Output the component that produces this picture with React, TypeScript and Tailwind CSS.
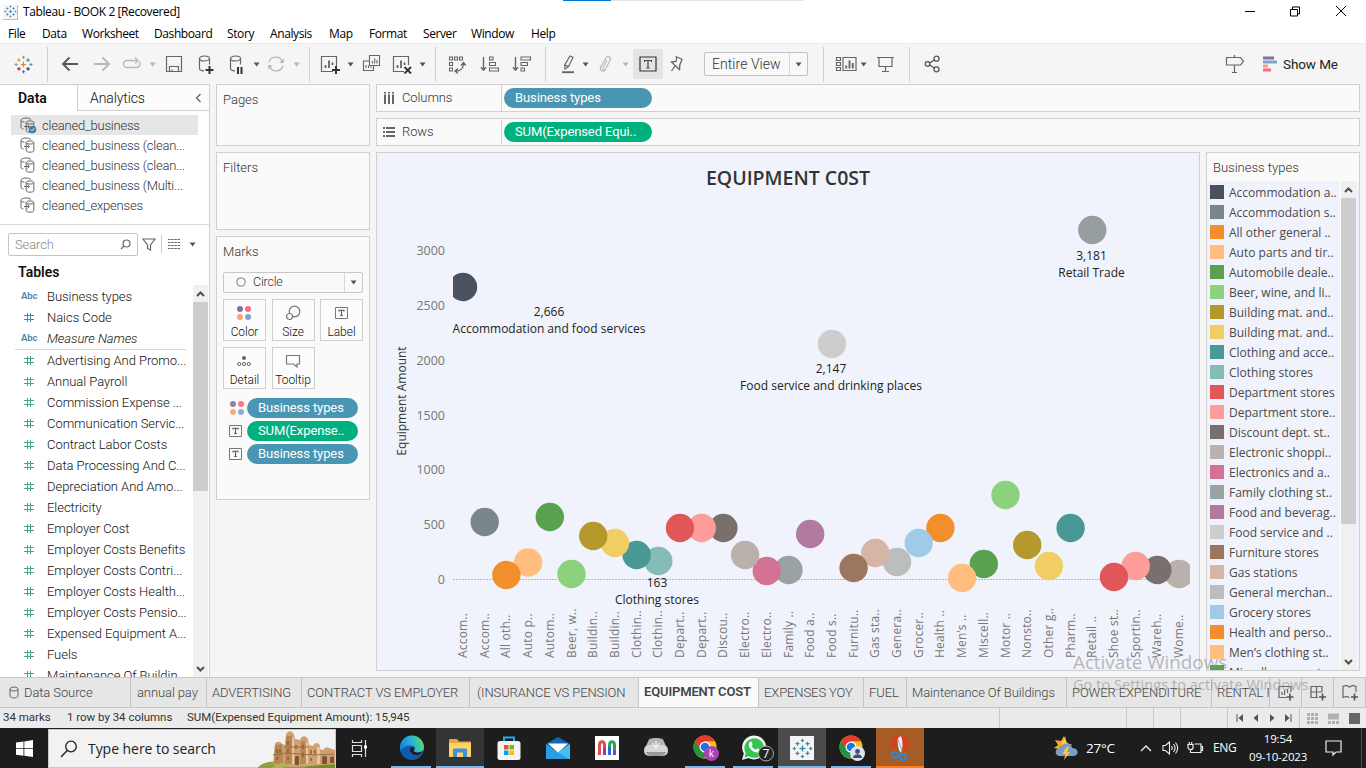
import React from "react";

type Kids = { children?: React.ReactNode; className?: string };

/* ---------- shared drawing helpers ---------- */

function Ico({
  children,
  w = 20,
  h = 20,
  className = "",
}: Kids & { w?: number; h?: number }) {
  return (
    <svg
      width={w}
      height={h}
      viewBox={`0 0 ${w} ${h}`}
      fill="none"
      className={"block shrink-0 " + className}
    >
      {children}
    </svg>
  );
}

function Caret({ className = "", light = false }: { className?: string; light?: boolean }) {
  return (
    <Ico w={7} h={5} className={className}>
      <path d="M.6.6h6L3.600 4.400z" fill={light ? "#b4b4b4" : "#555"} />
    </Ico>
  );
}

function Divider({ className = "" }: { className?: string }) {
  return <div className={"h-[35px] w-px shrink-0 bg-[#cfcfcf] " + className} />;
}

function plus(x: number, y: number, r: number) {
  return `M${x - r} ${y}h${2 * r}M${x} ${y - r}v${2 * r}`;
}

function TableauMark({ mono = false, size = 20 }: { mono?: boolean; size?: number }) {
  const c = (s: string) => (mono ? "#3c84ad" : s);
  return (
    <svg width={size} height={size} viewBox="0 0 20 20" fill="none" className="block shrink-0">
      <path d={plus(10, 10, 2.8)} stroke={c("#e8762c")} strokeWidth="1.2" />
      <path d={plus(5.2, 5.4, 1.9)} stroke={c("#e79a3c")} strokeWidth="1.1" />
      <path d={plus(14.8, 5.4, 1.9)} stroke={c("#5b879b")} strokeWidth="1.1" />
      <path d={plus(5.2, 14.6, 1.9)} stroke={c("#c72035")} strokeWidth="1.1" />
      <path d={plus(14.8, 14.6, 1.9)} stroke={c("#1f447e")} strokeWidth="1.1" />
      <path d={plus(10, 2.4, 1.6)} stroke={c("#7099a6")} strokeWidth="1.1" />
      <path d={plus(2.2, 10, 1.6)} stroke={c("#7099a6")} strokeWidth="1.1" />
      <path d={plus(17.8, 10, 1.6)} stroke={c("#59879b")} strokeWidth="1.1" />
      <path d={plus(10, 17.6, 1.6)} stroke={c("#5b6591")} strokeWidth="1.1" />
    </svg>
  );
}

/* ---------- title and menu ---------- */

function TitleBar() {
  return (
    <div className="relative flex h-6 shrink-0 items-center bg-white pl-[3px]">
      <div className="flex size-[15px] items-center justify-center border-r border-b border-[#bdbdbd] bg-[#f5f5f5]">
        <TableauMark mono size={13} />
      </div>
      <span className="ml-[5px] font-['Open_Sans','Noto_Sans',sans-serif] text-[12px] leading-6 tracking-[-0.4px] text-black">
        Tableau - BOOK 2 [Recovered]
      </span>
      <div className="absolute top-0 left-[563px] flex h-px w-[241px] bg-[#e3e3e3]">
        <div className="h-px w-12 bg-[#0078d7]" />
      </div>
      <div className="ml-auto flex items-center pr-[19px] pb-[3px]">
        <Ico w={10} h={12}>
          <path d="M0 6.500h10" stroke="#000" />
        </Ico>
        <Ico w={10} h={12} className="ml-[35px]">
          <path d="M.5 4.500h7v6.500h-7zM2.500 4.500v-2.500h7v7h-2" stroke="#000" />
        </Ico>
        <Ico w={12} h={12} className="ml-[35px]">
          <path d="M1 1l10 10M11 1L1 11" stroke="#000" />
        </Ico>
      </div>
    </div>
  );
}

const menus: [string, string][] = [
  ["File", "w-[34px]"],
  ["Data", "w-[40px]"],
  ["Worksheet", "w-[72px]"],
  ["Dashboard", "w-[73px]"],
  ["Story", "w-[43px]"],
  ["Analysis", "w-[59px]"],
  ["Map", "w-[40px]"],
  ["Format", "w-[54px]"],
  ["Server", "w-[48px]"],
  ["Window", "w-[60px]"],
  ["Help", "w-[40px]"],
];

function MenuBar() {
  return (
    <div className="flex h-[19px] shrink-0 bg-white pl-2 font-['Open_Sans','Noto_Sans',sans-serif] text-[12px] leading-[20px] tracking-[-0.4px] text-black">
      {menus.map(([m, w]) => (
        <span key={m} className={"shrink-0 whitespace-nowrap " + w}>
          {m}
        </span>
      ))}
    </div>
  );
}

/* ---------- toolbar ---------- */

const S = "#666";
const L = "#b8b8b8";

function Toolbar() {
  return (
    <div className="flex h-[41px] shrink-0 items-center border-t border-[#ececec] bg-[#f5f5f5] pl-[14px]">
      <TableauMark size={19} />
      <Divider className="ml-[14px]" />
      <Ico className="ml-3">
        <path d="M18 10H3M9.500 3.500L3 10l6.500 6.500" stroke="#555" strokeWidth="1.800" />
      </Ico>
      <Ico className="ml-3">
        <path d="M2 10h15M10.500 3.500L17 10l-6.500 6.500" stroke={L} strokeWidth="1.800" />
      </Ico>
      <Ico className="ml-[10px]">
        <path d="M10 6.500H5a3.500 3.500 0 000 7h9.500a3.500 3.500 0 002.500-6M9 6.500h6M13 3.500l3 3-3 3" stroke={L} strokeWidth="1.300" />
      </Ico>
      <Caret light className="ml-[7px]" />
      <Ico className="ml-2">
        <path d="M2.500 2.500h15v15h-15zM5.500 17.500v-5h9v5M8 17.500v-2" stroke={S} strokeWidth="1.200" />
      </Ico>
      <Ico className="ml-3">
        <ellipse cx="8.500" cy="4.500" rx="5" ry="2.500" stroke={S} strokeWidth="1.200" />
        <path d="M3.500 4.500v10c0 1.200 1.800 2.200 4.500 2.300M13.500 4.500v6" stroke={S} strokeWidth="1.200" />
        <path d="M13.500 12v8M9.500 16h8" stroke="#333" strokeWidth="2" />
      </Ico>
      <Ico className="ml-[11px]">
        <ellipse cx="8.500" cy="4.500" rx="5" ry="2.500" stroke={S} strokeWidth="1.200" />
        <path d="M3.500 4.500v10c0 1.200 1.800 2.200 4.500 2.300M13.500 4.500v6" stroke={S} strokeWidth="1.200" />
        <path d="M11 13v7M14.500 13v7" stroke="#333" strokeWidth="2" />
      </Ico>
      <Caret className="ml-[6px]" />
      <Ico className="ml-[6px]">
        <path d="M3 8.500a7 7 0 0113.500-.5M17 11.500a7 7 0 01-13.500.5" stroke={L} strokeWidth="1.300" />
        <path d="M17.800 4.500v4.500h-4.500zM2.200 15.500v-4.500h4.500z" fill={L} />
      </Ico>
      <Caret light className="ml-[7px]" />
      <Divider className="ml-[9px]" />
      <Ico w={22} className="ml-[10px]">
        <path d="M13 17.500H1.500v-15h15V12" stroke={S} strokeWidth="1.200" />
        <path d="M5.500 14v-3M9 14V6.500M12.500 11V8.500" stroke={S} strokeWidth="1.800" />
        <path d="M16 12v8M12 16h8" stroke="#333" strokeWidth="2" />
      </Ico>
      <Caret className="ml-[5px]" />
      <Ico className="ml-[7px]">
        <path d="M8.500 1.500h10v10h-10zM8.500 7h-6v9.500h10v-5" stroke={S} strokeWidth="1.100" />
        <path d="M11.500 9.500V7M13.700 9.500v-5M16 9.500V6M5 14v-3M7.500 14v-2.500M10 14v-1.500" stroke={S} strokeWidth="1.100" />
      </Ico>
      <Ico w={22} className="ml-[11px]">
        <path d="M12 17.500H1.500v-15h15V11" stroke={S} strokeWidth="1.200" />
        <path d="M5.500 14v-3M9 14V6.500M12.500 11V8.500" stroke={S} strokeWidth="1.800" />
        <path d="M12.500 13l6.500 6.500M19 13l-6.500 6.500" stroke="#333" strokeWidth="1.900" />
      </Ico>
      <Caret className="ml-[5px]" />
      <Divider className="ml-[9px]" />
      <Ico className="ml-[11px]">
        <path d="M2.500 3h3v3h-3zM7.500 3h3v3h-3zM12.500 3h3v3h-3zM2.500 8.500h3v3h-3zM2.500 14h3v3h-3z" stroke={S} strokeWidth="1.100" />
        <path d="M9 17c4.500 0 7.500-3 7.500-7.500M14 11.500l2.500-3 2.300 3M11 14.500L8 17l3 2.500" stroke={S} strokeWidth="1.300" />
      </Ico>
      <Ico className="ml-[13px]">
        <path d="M3.500 3v13M1 13.200l2.500 3 2.500-3" stroke={S} strokeWidth="1.400" />
        <path d="M9.500 3h3.500v3H9.500zM9.500 8.500h6v3h-6zM9.500 14h9v3h-9z" stroke={S} strokeWidth="1.100" />
      </Ico>
      <Ico className="ml-3">
        <path d="M3.500 3v13M1 13.200l2.500 3 2.500-3" stroke={S} strokeWidth="1.400" />
        <path d="M9 3h9.500v3H9zM9 8.500h6.500v3H9zM9 14h3.500v3H9z" stroke={S} strokeWidth="1.100" />
      </Ico>
      <Divider className="ml-[13px]" />
      <Ico className="ml-3">
        <path d="M12 2l3 1.200-4.500 9.500L7 15l-.3-4zM7 11l3.500 1.600" stroke={S} strokeWidth="1.200" />
        <path d="M4 18.200h12" stroke={S} strokeWidth="1.900" />
      </Ico>
      <Caret className="ml-1" />
      <Ico className="ml-[7px]">
        <path d="M11 6l-4 7.500c-1 2.200 1.600 3.300 2.700 1.300L14 6.500c1.600-3.500-2.500-5.400-4.300-2.200L4.700 13c-1.600 3.500 2.300 5.500 4.600 2.800" stroke={L} strokeWidth="1.200" />
      </Ico>
      <Caret light className="ml-[6px]" />
      <div className="ml-1 flex size-[30px] shrink-0 items-center justify-center bg-[#e3e3e3]">
        <Ico w={18} h={16}>
          <path d="M1 1h16v14H1z" stroke="#333" strokeWidth="1.200" />
          <path d="M5.500 6V4.500h7V6M9 4.500v7.500M7.300 12h3.400" stroke="#444" strokeWidth="1.200" />
        </Ico>
      </div>
      <Ico className="ml-[5px]">
        <path d="M7.500 2.500l7 3M8.800 3.200L8 7.500 3.500 8l8 7.500.3-4.500 2.200-5.500M7.300 11.500L3.500 17" stroke={S} strokeWidth="1.300" />
      </Ico>
      <div className="ml-4 flex h-6 w-[104px] shrink-0 items-center rounded-[2px] border border-[#c3c3c3] bg-[#f8f8f8]">
        <span className="w-[84px] pl-[7px] text-[14px] font-light tracking-[0.05px] text-[#333]">Entire View</span>
        <div className="h-[22px] w-px bg-[#d8d8d8]" />
        <Caret className="ml-[5px]" />
      </div>
      <Divider className="ml-[15px]" />
      <Ico w={22} className="ml-[11px]">
        <path d="M1.500 3.500h4v3h-4zM1.500 8.500h4v3h-4zM1.500 13.500h4v3h-4zM8 3.500h13v13H8z" stroke={S} strokeWidth="1.200" />
        <path d="M11.200 14.500v-3M14.500 14.500V6.500M17.800 14.500V9" stroke={S} strokeWidth="1.900" />
      </Ico>
      <Caret className="ml-[3px]" />
      <Ico className="ml-[9px]">
        <path d="M1 3.500h17M3 4v8.500h13V4M9.500 12.500v5M6 17.500h7" stroke={S} strokeWidth="1.200" />
      </Ico>
      <Divider className="ml-[13px]" />
      <Ico className="ml-3">
        <path d="M7.500 9l5-3M7.500 11l5 3" stroke="#555" strokeWidth="1.300" />
        <circle cx="5.500" cy="10" r="2.300" stroke="#555" strokeWidth="1.300" />
        <circle cx="14.500" cy="4.700" r="2.500" stroke="#555" strokeWidth="1.300" />
        <circle cx="14.500" cy="15.300" r="2.500" stroke="#555" strokeWidth="1.300" />
      </Ico>
      <Ico className="ml-auto">
        <path d="M1.500 3.500H15.500l3 3.800-3 3.700H1.500zM9.500 1v2.500M9.500 11v7.500M7 18.500h5" stroke={S} strokeWidth="1.200" />
      </Ico>
      <Ico w={14} h={16} className="ml-[18px]">
        <path d="M0 2h11" stroke="#8a6f9b" strokeWidth="3" />
        <path d="M0 6h14" stroke="#80a5cc" strokeWidth="3" />
        <path d="M0 10h5" stroke="#f5a47a" strokeWidth="3" />
        <path d="M0 14h8" stroke="#fa6b7c" strokeWidth="3" />
      </Ico>
      <span className="mr-[29px] ml-[6px] w-[54px] text-[13.500px] tracking-[-0.1px] whitespace-nowrap text-[#222]">
        Show Me
      </span>
    </div>
  );
}

/* ---------- data pane ---------- */

function SourceIcon({ checked = false }: { checked?: boolean }) {
  return (
    <Ico w={18} h={18}>
      <path d="M4.500 13C3 12.800 2 12.200 2 11.500V4.500M7 2C4 2 2 3 2 4.200M2 4.500c0 .8 1.500 1.500 3.500 1.600M7 2c2 0 4 .5 5 1.500" stroke="#666" />
      <ellipse cx="11" cy="6.500" rx="3.800" ry="1.600" stroke="#666" />
      <path d="M7.200 6.500v8c0 1 1.500 1.700 3.800 1.700s3.800-.7 3.800-1.700v-8M5 10.500h5M8.500 8.700l1.900 1.800-1.900 1.800" stroke="#666" />
      {checked && (
        <>
          <circle cx="13.500" cy="13.500" r="3.800" fill="#3a7f9f" />
          <path d="M11.800 13.500l1.300 1.300 2.200-2.400" stroke="#fff" />
        </>
      )}
    </Ico>
  );
}

const sources = [
  "cleaned_business",
  "cleaned_business (clean...",
  "cleaned_business (clean...",
  "cleaned_business (Multi...",
  "cleaned_expenses",
];

const measures = [
  "Advertising And Promo...",
  "Annual Payroll",
  "Commission Expense ...",
  "Communication Servic...",
  "Contract Labor Costs",
  "Data Processing And C...",
  "Depreciation And Amo...",
  "Electricity",
  "Employer Cost",
  "Employer Costs Benefits",
  "Employer Costs Contri...",
  "Employer Costs Health...",
  "Employer Costs Pensio...",
  "Expensed Equipment A...",
  "Fuels",
  "Maintenance Of Buildin",
];

function Hash({ color }: { color: string }) {
  return (
    <Ico w={10} h={11} className="mr-[13px] ml-6">
      <path d="M3.500 1v9M6.500 1v9M0 3.500h10M0 7.500h10" stroke={color} />
    </Ico>
  );
}

function Abc() {
  return (
    <span className="mr-[6px] ml-[21px] w-5 text-[9.500px] font-semibold tracking-[-0.1px] text-[#4a84a3]">
      Abc
    </span>
  );
}

function FieldRow({ children }: Kids) {
  return (
    <div className="flex h-[21px] shrink-0 items-center text-[13px] font-light tracking-[-0.05px] whitespace-nowrap text-[#111]">
      {children}
    </div>
  );
}

function ScrollArrow({ up = false }: { up?: boolean }) {
  return (
    <div className="flex h-[17px] shrink-0 items-center justify-center">
      <Ico w={9} h={6}>
        <path d={up ? "M1 5l3.500-3.500L8 5" : "M1 1l3.500 3.500L8 1"} stroke="#505050" strokeWidth="2" />
      </Ico>
    </div>
  );
}

function DataPane() {
  return (
    <div className="flex h-full w-[210px] shrink-0 flex-col overflow-hidden border-t border-r border-[#d0d0d0] bg-white">
      <div className="flex h-[26px] shrink-0 text-[14px] leading-[26px]">
        <div className="w-[77px] pl-[18px] font-semibold text-[#111]">Data</div>
        <div className="flex flex-1 items-center border-b border-l border-[#d0d0d0] bg-[#fcfcfc] pr-[7px] pl-3 font-light tracking-[-0.1px] text-[#111]">
          Analytics
          <Ico w={7} h={10} className="ml-auto">
            <path d="M5.500 1L1.500 5l4 4" stroke="#666" strokeWidth="1.300" />
          </Ico>
        </div>
      </div>
      <div className="flex h-[114px] shrink-0 flex-col border-b border-[#d8d8d8] pt-1 pl-[11px]">
        {sources.map((s, i) => (
          <div
            key={i}
            className={
              "flex h-5 w-[187px] items-center pl-2 text-[13px] font-light tracking-[-0.2px] text-[#333] " +
              (i === 0 ? "bg-[#e6e6e6]" : "")
            }
          >
            <SourceIcon checked={i === 0} />
            <span className="ml-[5px] pt-px whitespace-nowrap">{s}</span>
          </div>
        ))}
      </div>
      <div className="flex h-[38px] shrink-0 items-center pl-2">
        <div className="flex h-[23px] w-[130px] items-center rounded-[2px] border border-[#c4c4c4] pr-[6px] pl-[6px] text-[13px] font-light tracking-[-0.1px] text-[#888]">
          <span className="pt-px">Search</span>
          <Ico w={11} h={11} className="ml-auto">
            <circle cx="6.500" cy="4.500" r="3.500" stroke="#666" strokeWidth="1.200" />
            <path d="M4 7L1 10" stroke="#666" strokeWidth="1.300" />
          </Ico>
        </div>
        <Ico w={14} h={13} className="ml-1">
          <path d="M1 1h12L8.500 7v5l-3-1.500V7z" stroke="#666" strokeWidth="1.200" />
        </Ico>
        <div className="ml-[5px] h-[18px] w-px bg-[#ccc]" />
        <Ico w={12} h={10} className="ml-[6px]">
          <path d="M0 .5h12M0 3.500h12M0 6.500h12M0 9.500h12" stroke="#666" strokeDasharray="2.500 .7" />
        </Ico>
        <Caret className="ml-[9px]" />
      </div>
      <div className="h-[22px] shrink-0 pl-[18px] text-[14px] leading-[19px] font-semibold text-[#111]">Tables</div>
      <div className="flex min-h-0 flex-1">
        <div className="flex w-[193px] flex-col overflow-hidden pt-px">
          <FieldRow>
            <Abc />
            Business types
          </FieldRow>
          <FieldRow>
            <Hash color="#4a84a3" />
            Naics Code
          </FieldRow>
          <FieldRow>
            <Abc />
            <span className="italic">Measure Names</span>
          </FieldRow>
          <div className="mr-[7px] ml-[15px] h-px shrink-0 bg-[#d8d8d8]" />
          {measures.map((m) => (
            <FieldRow key={m}>
              <Hash color="#4ba583" />
              {m}
            </FieldRow>
          ))}
        </div>
        <div className="flex w-[15px] flex-col bg-[#f0f0f0]">
          <ScrollArrow up />
          <div className="h-[189px] bg-[#cdcdcd]" />
          <div className="flex-1" />
          <ScrollArrow />
        </div>
      </div>
    </div>
  );
}

/* ---------- cards column ---------- */

function ColorDots({ small = false }: { small?: boolean }) {
  return (
    <Ico w={16} h={16} className={small ? "opacity-90" : ""}>
      <circle cx="4" cy="4" r="3" fill="#8a6f9b" />
      <circle cx="12" cy="4" r="3" fill="#fa6b7c" />
      <circle cx="4" cy="12" r="3" fill="#f5a47a" />
      <circle cx="12" cy="12" r="3" fill="#80a5cc" />
    </Ico>
  );
}

function LabelIcon() {
  return (
    <Ico w={13} h={12}>
      <path d="M.5.5h12v11H.5z" stroke="#777" />
      <path d="M4 4.500V3.200h5v1.300M6.500 3.200v5.300M5.200 8.500h2.600" stroke="#555" strokeWidth="1.100" />
    </Ico>
  );
}

function Pill({ children, className = "" }: Kids) {
  return (
    <div
      className={
        "flex h-5 items-center rounded-full pl-[11px] text-[13px] tracking-[-0.1px] whitespace-nowrap text-white " + className
      }
    >
      {children}
    </div>
  );
}

function MarkButton({ label, children }: { label: string; children: React.ReactNode }) {
  return (
    <div className="flex h-[42px] w-[43px] flex-col items-center border border-[#d0d0d0] bg-[#fcfcfc]">
      <div className="flex h-[26px] shrink-0 items-center justify-center pr-px">{children}</div>
      <span className="text-[12px] leading-3 font-light tracking-[-0.05px] text-[#111]">{label}</span>
    </div>
  );
}

function Cards() {
  const card = "shrink-0 border border-[#d0d0d0] bg-[#fafafa] text-[13px] font-light text-[#333]";
  return (
    <div className="ml-[6px] flex w-[154px] shrink-0 flex-col gap-[6px]">
      <div className={card + " h-[62px] pt-[5px] pl-[6px]"}>Pages</div>
      <div className={card + " h-[78px] pt-[5px] pl-[6px]"}>Filters</div>
      <div className={card + " h-[264px] px-[6px] pt-[5px]"}>
        Marks
        <div className="mt-[10px] flex h-[21px] items-center rounded-[2px] border border-[#c8c8c8] pl-3 text-[12.500px] tracking-[-0.2px]">
          <Ico w={10} h={10}>
            <circle cx="5" cy="5" r="4.200" stroke="#999" strokeWidth="1.300" />
          </Ico>
          <span className="ml-[7px] pt-px">Circle</span>
          <div className="ml-auto h-full w-px bg-[#d8d8d8]" />
          <Caret className="mx-[5px]" />
        </div>
        <div className="mt-[6px] grid grid-cols-[43px_43px_43px] justify-between gap-y-[6px]">
          <MarkButton label="Color">
            <ColorDots />
          </MarkButton>
          <MarkButton label="Size">
            <Ico w={16} h={16}>
              <circle cx="9.500" cy="6.500" r="5.300" stroke="#777" strokeWidth="1.200" />
              <circle cx="4.500" cy="11.500" r="3" stroke="#777" strokeWidth="1.200" fill="#fcfcfc" />
            </Ico>
          </MarkButton>
          <MarkButton label="Label">
            <LabelIcon />
          </MarkButton>
          <MarkButton label="Detail">
            <Ico w={14} h={12}>
              <circle cx="7" cy="3" r="2" fill="#666" />
              <circle cx="2.200" cy="9" r="1.600" stroke="#666" />
              <circle cx="7" cy="9" r="1.600" stroke="#666" />
              <circle cx="11.800" cy="9" r="1.600" stroke="#666" />
            </Ico>
          </MarkButton>
          <MarkButton label="Tooltip">
            <Ico w={16} h={14}>
              <path d="M1.500 1.500h13v8.500h-2.500v3l-3.500-3h-7z" stroke="#777" strokeWidth="1.200" />
            </Ico>
          </MarkButton>
        </div>
        <div className="mt-[9px] flex flex-col gap-[3px] font-normal">
          <div className="flex items-center pl-[6px]">
            <ColorDots small />
            <Pill className="ml-[2px] w-[111px] bg-[#4996b2]">Business types</Pill>
          </div>
          <div className="flex items-center pl-[6px]">
            <LabelIcon />
            <Pill className="ml-[5px] w-[111px] bg-[#00b180]">SUM(Expense..</Pill>
          </div>
          <div className="flex items-center pl-[6px]">
            <LabelIcon />
            <Pill className="ml-[5px] w-[111px] bg-[#4996b2]">Business types</Pill>
          </div>
        </div>
      </div>
    </div>
  );
}

/* ---------- shelves ---------- */

function Shelf({ label, icon, children }: { label: string; icon: React.ReactNode; children: React.ReactNode }) {
  return (
    <div className="flex h-7 shrink-0 items-center border border-[#d0d0d0] bg-[#fafafa]">
      <div className="flex h-full w-[125px] items-center border-r border-[#d0d0d0] pl-[6px] text-[13px] font-light tracking-[-0.1px] text-[#333]">
        {icon}
        <span className="ml-[7px]">{label}</span>
      </div>
      {children}
    </div>
  );
}

/* ---------- chart ---------- */

const marks: [string, number, string][] = [
  ["Accom..", 287, "#49525e"],
  ["Accom..", 522, "#79868b"],
  ["All oth..", 575, "#f28e2b"],
  ["Auto p..", 562.5, "#ffbe7d"],
  ["Autom..", 517, "#59a14f"],
  ["Beer, w..", 574, "#8cd17d"],
  ["Buildin..", 536, "#b6992d"],
  ["Buildin..", 543, "#f1ce63"],
  ["Clothin..", 555, "#499894"],
  ["Clothin..", 561, "#86bcb6"],
  ["Depart..", 528, "#e15759"],
  ["Depart..", 528, "#ff9d9a"],
  ["Discou..", 528, "#79706e"],
  ["Electro..", 555, "#bab0ac"],
  ["Electro..", 571, "#d37295"],
  ["Family ..", 570, "#9aa2a3"],
  ["Food a..", 534, "#b07aa1"],
  ["Food s..", 344, "#cdcdcd"],
  ["Furnitu..", 568, "#9d7660"],
  ["Gas sta..", 553, "#d7b5a6"],
  ["Genera..", 562, "#bcbebd"],
  ["Grocer..", 543, "#a0cbe8"],
  ["Health ..", 528, "#f28e2b"],
  ["Men’s ..", 578, "#ffbe7d"],
  ["Miscell..", 564, "#59a14f"],
  ["Motor ..", 495, "#8cd17d"],
  ["Nonsto..", 545, "#b6992d"],
  ["Other g..", 566, "#f1ce63"],
  ["Pharm..", 528, "#499894"],
  ["Retail ..", 230, "#969e9f"],
  ["Shoe st..", 577, "#e15759"],
  ["Sportin..", 566, "#ff9d9a"],
  ["Wareh..", 570, "#79706e"],
  ["Wome..", 574, "#bab0ac"],
];

const axis: [number, number][] = [
  [3000, 250.5],
  [2500, 305.5],
  [2000, 360.5],
  [1500, 415.5],
  [1000, 469.5],
  [500, 524.5],
  [0, 579.5],
];

const callouts: [number, number, string, string][] = [
  [549, 316, "2,666", "Accommodation and food services"],
  [831, 373, "2,147", "Food service and drinking places"],
  [1091.5, 260, "3,181", "Retail Trade"],
  [657, 587, "163", "Clothing stores"],
];

const cx = (i: number) => 463 + i * 21.7;

function Chart() {
  return (
    <div className="h-full w-[824px] shrink-0 border border-[#d0d0d0] bg-[#f0f3fb]">
      <svg
        width="822"
        height="517"
        viewBox="377 153 822 517"
        className="block font-['Open_Sans','Noto_Sans',sans-serif]"
      >
        <defs>
          <clipPath id="plot">
            <rect x="453" y="198" width="737" height="411" />
          </clipPath>
        </defs>
        <text x="788" y="185" textAnchor="middle" className="text-[19.500px] font-semibold" fill="#333">
          EQUIPMENT C0ST
        </text>
        <path d="M452.500 198V611M452.500 609.500H1191" stroke="#f4f4f5" />
        {axis.map(([v, y]) => (
          <g key={v}>
            {v > 0 && <path d={`M448 ${y}H1191`} stroke="#f3f4f6" />}
            <text x="445" y={y + 4.5} textAnchor="end" className="text-[12.500px]" fill="#777">
              {v}
            </text>
          </g>
        ))}
        <path d="M453 579.500H1190" stroke="#bbb" strokeDasharray="2 1" />
        <g clipPath="url(#plot)">
          {marks
            .map(([, y, c], i) => <circle key={i} cx={cx(i)} cy={y} r="14.200" fill={c} />)
            .reverse()}
        </g>
        {marks.map(([n], i) => (
          <text
            key={i}
            transform={`translate(${cx(i) + 4} 658) rotate(-90)`}
            className="text-[12px] tracking-[0.2px]"
            fill="#787878"
          >
            {n}
          </text>
        ))}
        {callouts.map(([x, y, v, n]) => (
          <g key={n} textAnchor="middle" className="text-[12px]" fill="#222">
            <text x={x} y={y}>
              {v}
            </text>
            <text x={x} y={y + 17}>
              {n}
            </text>
          </g>
        ))}
        <text transform="translate(406 401) rotate(-90)" textAnchor="middle" className="text-[12px]" fill="#333">
          Equipment Amount
        </text>
      </svg>
    </div>
  );
}

const legend = [
  "Accommodation a..",
  "Accommodation s..",
  "All other general ..",
  "Auto parts and tir..",
  "Automobile deale..",
  "Beer, wine, and li..",
  "Building mat. and..",
  "Building mat. and..",
  "Clothing and acce..",
  "Clothing stores",
  "Department stores",
  "Department store..",
  "Discount dept. st..",
  "Electronic shoppi..",
  "Electronics and a..",
  "Family clothing st..",
  "Food and beverag..",
  "Food service and ..",
  "Furniture stores",
  "Gas stations",
  "General merchan..",
  "Grocery stores",
  "Health and perso..",
  "Men’s clothing st..",
  "Miscellaneous st..",
];

function Legend() {
  return (
    <div className="ml-[6px] flex w-[154px] shrink-0 flex-col overflow-hidden border border-[#d0d0d0] bg-[#fafafa]">
      <div className="h-7 shrink-0 pl-[6px] text-[13px] leading-[29px] font-light text-[#333]">Business types</div>
      <div className="flex min-h-0 flex-1 bg-[#f0f3fb]">
        <div className="flex w-[133px] flex-col overflow-hidden pt-px pl-[3px] font-['Open_Sans','Noto_Sans',sans-serif]">
          {legend.map((n, i) => (
            <div key={i} className="flex h-5 shrink-0 items-center text-[12px] whitespace-nowrap text-[#4a4a4a]">
              <svg width="14" height="14" className="mr-[5px] shrink-0">
                <rect width="14" height="14" fill={marks[i][2]} />
              </svg>
              <span className="pt-[2px]">{n}</span>
            </div>
          ))}
        </div>
        <div className="flex w-4 flex-col border-l border-white bg-[#f0f0f0]">
          <ScrollArrow up />
          <div className="h-[326px] bg-[#cdcdcd]" />
          <div className="flex-1" />
          <ScrollArrow />
        </div>
      </div>
    </div>
  );
}

/* ---------- sheet tabs and status ---------- */

const tabs: [string, string][] = [
  ["annual pay", "w-[76px] pl-[6px]"],
  ["ADVERTISING", "w-[95px] pl-[5px]"],
  ["CONTRACT VS EMPLOYER", "w-[168px] pl-[5px]"],
  ["(INSURANCE VS PENSION", "w-[169px] pl-[7px]"],
  ["EQUIPMENT COST", "w-[120px] pl-[5px]"],
  ["EXPENSES YOY", "w-[105px] pl-[5px]"],
  ["FUEL", "w-[43px] pl-[5px]"],
  ["Maintenance Of Buildings", "w-[160px] pl-[5px]"],
  ["POWER EXPENDITURE", "w-[145px] pl-[5px]"],
  ["RENTAL F", "w-[58px] pl-[5px]"],
];

function SheetTabs() {
  const base = "flex h-full shrink-0 items-center overflow-hidden border-r border-[#c4c4c4] whitespace-nowrap ";
  const extra = base + "w-8 justify-center";
  return (
    <div className="flex h-[31px] shrink-0 border-t border-b border-[#c8c8c8] bg-[#e6e6e6] text-[13px] font-light tracking-[-0.1px] text-[#444]">
      <div className={base + "w-[131px] pl-[9px]"}>
        <Ico w={10} h={13} className="mr-[5px]">
          <ellipse cx="5" cy="3" rx="4" ry="2" stroke="#666" />
          <path d="M1 3v7c0 2.500 8 2.500 8 0V3" stroke="#666" />
        </Ico>
        Data Source
      </div>
      {tabs.map(([t, w], i) => (
        <div key={t} className={base + w + (i === 4 ? " bg-[#fafafa] pb-px font-semibold tracking-[-0.15px]" : "")}>
          {t}
        </div>
      ))}
      <div className={extra}>
        <Ico w={18} h={18}>
          <path d="M9.500 13.500H2v-11h12V8" stroke="#666" strokeWidth="1.200" />
          <path d="M5 11V8M7.500 11V6M10.500 9V5" stroke="#666" strokeWidth="1.200" />
          <path d="M13 9.500v7M9.500 13H16.500" stroke="#555" strokeWidth="1.600" />
        </Ico>
      </div>
      <div className={extra}>
        <Ico w={18} h={18}>
          <path d="M9 13.500H2v-11h11V8M2 8h11M7.500 2.500v11" stroke="#666" strokeWidth="1.200" />
          <path d="M13.500 9.500v7M10 13h7" stroke="#555" strokeWidth="1.600" />
        </Ico>
      </div>
      <div className={extra}>
        <Ico w={18} h={18}>
          <path d="M8.500 13.500l-3-1-3.500 1V2.500l3.500-1 3 1.500 3-1.500 3.500 1V8M8.500 3v.5" stroke="#666" strokeWidth="1.200" />
          <path d="M13.500 9.500v7M10 13h7" stroke="#555" strokeWidth="1.600" />
        </Ico>
      </div>
    </div>
  );
}

function StatusBar() {
  const cell = "h-full shrink-0 border-l border-[#cacaca] ";
  return (
    <div className="flex h-5 shrink-0 items-center bg-[#ebebeb] pl-[3px] text-[11.500px] tracking-[-0.02px] whitespace-nowrap text-[#333]">
      <span className="w-[64px]">34 marks</span>
      <span className="w-[120px]">1 row by 34 columns</span>
      <span>SUM(Expensed Equipment Amount): 15,945</span>
      <div className={cell + "ml-auto w-[127px]"} />
      <div className={cell + "w-[27px]"} />
      <div className={cell + "w-[27px]"} />
      <div className={cell + "w-[47px]"} />
      <div className={cell + "flex w-[72px] items-center justify-center gap-2"}>
        <Ico w={8} h={8}>
          <path d="M1 0v8" stroke="#555" />
          <path d="M7 0v8L2.500 4z" fill="#555" />
        </Ico>
        <Ico w={8} h={8}>
          <path d="M6 0v8L1.500 4z" fill="#555" />
        </Ico>
        <Ico w={8} h={8}>
          <path d="M2 0v8l4.500-4z" fill="#555" />
        </Ico>
        <Ico w={8} h={8}>
          <path d="M7 0v8" stroke="#555" />
          <path d="M1 0v8l4.500-4z" fill="#555" />
        </Ico>
      </div>
      <div className={cell + "flex w-[67px] items-center gap-[10px] pl-[7px]"}>
        <Ico w={11} h={11}>
          <path d="M0 1.500h11M0 5.500h11M0 9.500h11" stroke="#b0b0b0" strokeWidth="3" strokeDasharray="3 1" />
        </Ico>
        <Ico w={11} h={11}>
          <path d="M0 3.500h11" stroke="#b0b0b0" strokeWidth="6" />
          <path d="M0 9.500h11" stroke="#b0b0b0" strokeWidth="3" strokeDasharray="3 1" />
        </Ico>
        <Ico w={11} h={11}>
          <path d="M0 0h11v11H0z" fill="#666" />
        </Ico>
      </div>
    </div>
  );
}

/* ---------- taskbar ---------- */

function Task({ children, className = "", line = "" }: Kids & { line?: string }) {
  return (
    <div className={"relative flex h-10 shrink-0 items-center justify-center " + className}>
      {children}
      {line && <div className={"absolute bottom-0 h-0.5 " + line} />}
    </div>
  );
}

function Chrome() {
  return (
    <>
      <circle cx="12" cy="12" r="11.500" fill="#fbc116" />
      <path d="M2 6.300A11.500 11.500 0 0011 23.500l5-9.200H8z" fill="#229342" />
      <path d="M12 6.300h10a11.500 11.500 0 00-20 0l5 8z" fill="#e33b2e" />
      <circle cx="12" cy="12" r="5.500" fill="#fff" />
      <circle cx="12" cy="12" r="4.300" fill="#1a73e8" />
    </>
  );
}

function Castle() {
  return (
    <Ico w={77} h={38}>
      <path d="M0 38c2-5 14-8 30-6 18 3 32 1 48 1v5z" fill="#8aa23a" />
      <path d="M46 38c8-4 22-4 32-3v3z" fill="#6f8f22" />
      <path d="M15 35l2-21c1-3 6-3 7 0l3 1 1-10c1-5 7-5 8 0l1 4 5 1c1-5 7-5 8 0l1 5 4 1c1-4 6-4 7 0v3l3 1 3-3 9 3v14l-24 2-20 1z" fill="#cfa172" />
      <path d="M17 15l7-1 1 19-9 1zM28 6h6v28h-7zM43 11h4l1 23h-6z" fill="#b78652" />
      <path d="M34 7l2 1v26h-2zM48 12l2 1v21h-2zM59 17h3v17h-3z" fill="#e6c79b" />
      <path d="M37 35v-7c0-3 4-3 4 0v7zM64 34v-6c0-3 5-3 5 0v6zM72 33v-5c0-2 4-2 4 0v5z" fill="#7c5434" />
      <path d="M19 19v4M22 19v4M30 11v4M30 19v4M38 15v4M45 15v4M45 23v4M53 20v4M57 20v4M19 27v3M30 27v3M53 28v3" stroke="#80572f" strokeWidth="1.300" />
      <path d="M15 25l13-2 14 1 14 1 20-1M26 17h24" stroke="#9b6d41" />
      <path d="M14 38c3-4 10-5 17-3-5 0-6 3-6 3z" fill="#a9b84f" />
    </Ico>
  );
}

function Taskbar() {
  return (
    <div className="flex h-10 shrink-0 bg-[#1d1d1d] font-['Open_Sans','Noto_Sans',sans-serif] text-white">
      <Task className="w-12">
        <Ico w={17} h={17}>
          <path d="M0 2.500l7.500-1v6.700H0zM8.300 1.400L17 0v8.200H8.300zM0 9h7.500v6.700l-7.500-1zM8.300 9H17v8l-8.700-1.200z" fill="#fff" />
        </Ico>
      </Task>
      <div className="mt-px flex h-[39px] w-[288px] shrink-0 items-center border border-[#c9c9c9] bg-[#f2f2f2] pl-[11px] text-[#222]">
        <Ico w={17} h={18}>
          <circle cx="11" cy="6.500" r="5.300" stroke="#222" strokeWidth="1.300" />
          <path d="M7.200 10.500L1 17" stroke="#222" strokeWidth="1.400" />
        </Ico>
        <span className="ml-[11px] text-[14px] tracking-[-0.05px] whitespace-nowrap">Type here to search</span>
        <div className="ml-auto">
          <Castle />
        </div>
      </div>
      <Task className="w-[47px]">
        <Ico w={17} h={17}>
          <path d="M1.500 0v2.500h9V0M1.500 5.500h9v6h-9zM1.500 17v-2.500h9V17M14.500 0v17" stroke="#ddd" strokeWidth="1.200" />
          <path d="M13 5.500h3v3h-3z" fill="#fff" />
        </Ico>
      </Task>
      <Task className="w-[53px]" line="left-2 w-10 bg-[#76b9ed]">
        <Ico w={26} h={26} className="ml-1">
          <defs>
            <linearGradient id="edge" x1="0" y1=".6" x2="1" y2=".3">
              <stop offset="0" stopColor="#1b7fd0" />
              <stop offset=".5" stopColor="#28b0e0" />
              <stop offset="1" stopColor="#5be05a" />
            </linearGradient>
          </defs>
          <circle cx="13" cy="13" r="12" fill="#0f5bb0" />
          <path d="M1 13A12 12 0 0125 12c0 4-3 6-6 6-2.500 0-4-.8-4-2 1.800-2.500.5-5.500-3.500-5.500-5 0-9 3-10.500 6z" fill="url(#edge)" />
          <path d="M15.500 13.500c0 1.200-1.500 2-.5 3 2.500 1.700 6.500.8 8.500-.5-1 2-2.500 3.500-4.500 4-4 .5-8-2-8-5 0-2 1.500-3 3-3 1 .2 1.500.8 1.500 1.500z" fill="#1d1d1d" />
        </Ico>
      </Task>
      <Task className="w-12 bg-[#343434]" line="inset-x-0 bg-[#76b9ed]">
        <Ico w={22} h={20}>
          <path d="M0 2c0-.6.400-1 1-1h7l2 2.500h11c.6 0 1 .4 1 1V19H0z" fill="#e9a63a" />
          <path d="M0 5h22v14H0z" fill="#fdd366" />
          <path d="M4 19v-7c0-1 .5-1.500 1.500-1.500h11c1 0 1.500.5 1.500 1.500v7h-4v-4.500H8V19z" fill="#3f92d8" />
        </Ico>
      </Task>
      <Task className="w-[49px]">
        <Ico w={24} h={26}>
          <path d="M7 8V2.500h10V8" stroke="#28a8ea" strokeWidth="2" />
          <rect x=".5" y="6" width="23" height="19" rx="2.500" fill="#f4f4f4" />
          <path d="M7 10h4.500v4.500H7z" fill="#f25022" />
          <path d="M12.500 10H17v4.500h-4.500z" fill="#7fba00" />
          <path d="M7 15.500h4.500V20H7z" fill="#00a4ef" />
          <path d="M12.500 15.500H17V20h-4.500z" fill="#ffb900" />
        </Ico>
      </Task>
      <Task className="w-[49px]">
        <Ico w={24} h={24}>
          <path d="M0 8l12-7 12 7v4H0z" fill="#1066b4" />
          <path d="M2 7.500h20L12 17z" fill="#fff" />
          <path d="M0 8l12 8.500L24 8v15H0z" fill="#2a9fe8" />
          <path d="M24 8v15L12 16.500z" fill="#3dc4f5" />
        </Ico>
      </Task>
      <Task className="w-[49px]">
        <Ico w={24} h={24}>
          <path d="M0 0h24v24H0z" fill="#fff" />
          <path d="M4.500 19V9.500c0-5 5-5 5 0V14" stroke="#e94b52" strokeWidth="3" />
          <path d="M9.500 12v7M19.500 12v7" stroke="#8a3bbf" strokeWidth="3" />
          <path d="M14.500 19V9.500c0-5 5-5 5 0V14" stroke="#26a65b" strokeWidth="3" />
          <path d="M14.500 11v8" stroke="#2c67d8" strokeWidth="3" />
        </Ico>
      </Task>
      <Task className="w-[50px]">
        <Ico w={24} h={24}>
          <path d="M1 12L5 3.500C7 1.500 17 1.500 19 3.500L23 12z" fill="#b5b5b5" />
          <rect x="0" y="9" width="24" height="11" rx="5" fill="#d6d6d6" />
          <path d="M2 16h20c-1 3-3 4-6 4H8c-3 0-5-1-6-4z" fill="#999" />
          <path d="M12 5v8M12 11l-3-2V7M12 10l3-1.500V7" stroke="#fff" />
        </Ico>
      </Task>
      <Task className="w-12" line="left-1 w-10 bg-[#76b9ed]">
        <Ico w={28} h={28} className="ml-[2px]">
          <g transform="translate(1 1)">
            <Chrome />
          </g>
          <circle cx="19.500" cy="19.500" r="7.500" fill="#a742b8" />
          <text x="19.500" y="23" textAnchor="middle" fontSize="10" fill="#fff">
            k
          </text>
        </Ico>
      </Task>
      <Task className="w-[49px]" line="left-1 w-10 bg-[#76b9ed]">
        <Ico w={36} h={28} className="ml-[9px]">
          <path d="M2 26l1.800-6.500A12 12 0 118.500 24z" fill="#f5f5f5" />
          <path d="M4.500 23.500L5.700 19A9.800 9.800 0 118.700 22.200z" fill="#35c451" />
          <path d="M9.500 8.500c1-1.500 2-1 2.500.3l.7 1.700-1 1.500c1 2 2.300 3 4.300 3.800l1.300-1.500 2.500 1.300c.6 1-1 3-3 3-4.500-.5-8.500-5-8-8.500z" fill="#fff" />
          <circle cx="26" cy="19.500" r="7.500" fill="#252525" stroke="#aaa" />
          <text x="26" y="24" textAnchor="middle" fontSize="12" fill="#fff">
            7
          </text>
        </Ico>
      </Task>
      <Task className="w-12 bg-[#4b4b4b]" line="inset-x-0 bg-[#76b9ed]">
        <div className="flex size-6 items-center justify-center bg-[#f4f4f4]">
          <TableauMark mono size={21} />
        </div>
      </Task>
      <Task className="w-[50px]" line="left-[5px] w-10 bg-[#76b9ed]">
        <Ico w={28} h={28} className="ml-[2px]">
          <g transform="translate(1 1)">
            <Chrome />
          </g>
          <circle cx="19.500" cy="19.500" r="7.500" fill="#dce3ee" />
          <circle cx="19.500" cy="17.500" r="2.400" fill="#3d4f6c" />
          <path d="M15 24c0-5 9-5 9 0z" fill="#3d4f6c" />
        </Ico>
      </Task>
      <Task className="w-12 bg-[#a65c24]" line="inset-x-0 bg-[#ff7c16]">
        <Ico w={22} h={28}>
          <path d="M5 3c8-4 17 1 15 10-1 4-4 6-7 5 4-3 4-9-1-10-4 0-7 3-6 8-5-2-6-9-1-13z" fill="#d83f1d" />
          <path d="M12 2c2 5 2 11 0 17l-2-3c-1-5-2-9-1-12z" fill="#eef0f3" />
          <path d="M9 5l4 12" stroke="#9ba5b0" />
          <circle cx="6" cy="21" r="3" stroke="#2b88dc" strokeWidth="2" />
          <circle cx="14" cy="23" r="3" stroke="#2b88dc" strokeWidth="2" />
        </Ico>
      </Task>
      <div className="ml-auto flex items-center">
        <Ico w={26} h={26}>
          <path d="M11 1l2.500 5.500L10 9l-4 5-5-1 4-3-3-5 6 1z" fill="#f3a928" />
          <path d="M13 1c-2 5 2 9 6 8l-6 5-5-5z" fill="#ffc84a" />
          <path d="M6 21c-5-1-4-8 1-8 2-6 12-6 12 0 6-1 8 7 2 8z" fill="#7c9dc2" />
          <path d="M13.500 12l-4 7h3l-1.500 6 6-8h-3l2-5z" fill="#ffc73a" />
        </Ico>
        <span className="ml-[7px] w-[54px] text-[13.500px] tracking-[-0.2px]">27°C</span>
        <Ico w={12} h={8}>
          <path d="M1 7l5-5 5 5" stroke="#eee" strokeWidth="1.400" />
        </Ico>
        <Ico w={17} h={16} className="ml-[10px]">
          <path d="M1 5.500h2.500L7.500 2v12l-4-3.500H1z" stroke="#eee" strokeWidth="1.100" />
          <path d="M9.500 6c1 1.300 1 2.700 0 4M11.500 4c2 2.500 2 5.500 0 8M13.500 2.500c2.800 3.500 2.800 7.500 0 11" stroke="#eee" strokeWidth="1.100" />
        </Ico>
        <Ico w={17} h={14} className="ml-[8px]">
          <path d="M7.500 3H14v8.500H5.500M14 5.500h1.500v4H14M1 3.500h5v3c0 1-1 2-2.500 2S1 7.500 1 6.500zM2.300 3.500V1M4.700 3.500V1M3.500 8.500v3h2" stroke="#eee" strokeWidth="1.200" />
        </Ico>
        <span className="ml-[9px] w-[36px] text-[12px] tracking-[-0.3px]">ENG</span>
        <div className="flex w-[58px] flex-col items-center text-[11.500px] leading-[18px] tracking-[-0.2px] whitespace-nowrap">
          <span>19:54</span>
          <span>09-10-2023</span>
        </div>
        <Ico w={17} h={18} className="ml-[18px]">
          <path d="M1 2h15v11h-5l-3 3v-3H1z" stroke="#eee" strokeWidth="1.200" />
        </Ico>
        <div className="mr-1 ml-[19px] h-10 w-px bg-[#4a4a4a]" />
      </div>
    </div>
  );
}

/* ---------- page ---------- */

export default function App() {
  return (
    <div className="relative flex h-[768px] w-[1366px] flex-col overflow-hidden bg-[#f5f5f5] font-['Roboto','Noto_Sans',sans-serif] leading-normal">
      <TitleBar />
      <MenuBar />
      <Toolbar />
      <div className="flex h-[593px] shrink-0">
        <DataPane />
        <Cards />
        <div className="ml-[6px] flex w-[984px] shrink-0 flex-col gap-[6px]">
          <Shelf
            label="Columns"
            icon={
              <Ico w={12} h={12}>
                <path d="M2 0v12M6 0v12M10 0v12" stroke="#666" strokeWidth="2" strokeDasharray="1.500 1 9.500" />
              </Ico>
            }
          >
            <Pill className="ml-[2px] w-[148px] bg-[#4996b2]">Business types</Pill>
          </Shelf>
          <Shelf
            label="Rows"
            icon={
              <Ico w={12} h={12}>
                <path d="M0 2h12M0 6h12M0 10h12" stroke="#666" strokeWidth="2" strokeDasharray="2 1 9" />
              </Ico>
            }
          >
            <Pill className="ml-[2px] w-[148px] bg-[#00b180]">SUM(Expensed Equi..</Pill>
          </Shelf>
          <div className="flex h-[519px] shrink-0">
            <Chart />
            <Legend />
          </div>
        </div>
      </div>
      <SheetTabs />
      <StatusBar />
      <Taskbar />
      <div className="pointer-events-none absolute top-[650px] left-[1073px] font-['Open_Sans','Noto_Sans',sans-serif] whitespace-nowrap text-[#8c8c8c]/60">
        <div className="text-[18.800px] leading-6">Activate Windows</div>
        <div className="mt-px text-[14.500px] leading-5 tracking-[0.05px]">Go to Settings to activate Windows.</div>
      </div>
    </div>
  );
}
